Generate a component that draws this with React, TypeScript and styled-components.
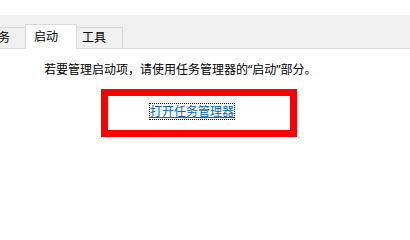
import React from 'react';
import styled, { createGlobalStyle } from 'styled-components';

const GlobalStyle = createGlobalStyle`
  body {
    margin: 0;
    background: #ffffff;
    font-family: "Noto Sans", "Noto Sans CJK SC", sans-serif;
    font-size: 12px;
    color: #000000;
  }
`;

const Window = styled.div`
  width: 410px;
  height: 226px;
  padding-top: 15px;
  box-sizing: border-box;
  overflow: hidden;
  background: #ffffff;
`;

const TabStrip = styled.div`
  display: flex;
  align-items: flex-end;
  height: 34px;
  box-sizing: border-box;
  background: #f0f0f0;
  border-bottom: 1px solid #d9d9d9;
`;

const Tab = styled.div<{ $active?: boolean; $first?: boolean }>`
  box-sizing: border-box;
  flex: none;
  height: ${(p) => (p.$active ? '25px' : '21px')};
  line-height: ${(p) => (p.$active ? '23px' : '19px')};
  padding: ${(p) => (p.$active ? '0 18px 0 8px' : '0 16px 0 6px')};
  margin: ${(p) => (p.$active ? '0 -2px -1px' : '0')};
  margin-left: ${(p) => (p.$first ? '-21px' : undefined)};
  border: 1px solid #d9d9d9;
  border-bottom: none;
  background: ${(p) => (p.$active ? '#ffffff' : '#f0f0f0')};
  color: #000000;
  white-space: nowrap;
  position: relative;
  z-index: ${(p) => (p.$active ? 1 : 0)};
`;

const Content = styled.div`
  padding: 13px 0 0 44px;
`;

const Description = styled.p`
  margin: 0;
  line-height: 16px;
  white-space: nowrap;
`;

const Highlight = styled.div`
  box-sizing: border-box;
  width: 196px;
  height: 48px;
  margin: 11px 0 0 57px;
  border: 7px solid #ff0000;
  padding: 7px 0 0 41px;
  display: flex;
  align-items: flex-start;
`;

const TaskLink = styled.a`
  display: inline-block;
  line-height: 15px;
  border: 1px dotted #000000;
  color: #0066cc;
  text-decoration: underline;
  white-space: nowrap;
  cursor: pointer;
`;

const App: React.FC = () => {
  return (
    <>
      <GlobalStyle />
      <Window>
        <TabStrip>
          <Tab $first>任务</Tab>
          <Tab $active>启动</Tab>
          <Tab>工具</Tab>
        </TabStrip>
        <Content>
          <Description>若要管理启动项，请使用任务管理器的“启动”部分。</Description>
          <Highlight>
            <TaskLink href="#">打开任务管理器</TaskLink>
          </Highlight>
        </Content>
      </Window>
    </>
  );
};

export default App;
